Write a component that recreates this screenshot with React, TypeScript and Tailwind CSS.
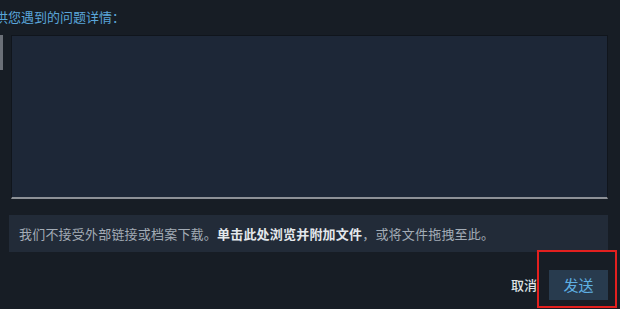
export default function App() {
  return (
    <div className="h-[309px] overflow-hidden bg-[#171d25] font-['Noto_Sans_CJK_SC','Noto_Sans',sans-serif]">
      <div className="w-[608px] pt-[8px]">
        {/* label, cut by the left edge of the view */}
        <div className="-ml-[18px] text-[13px] leading-[18px] whitespace-nowrap text-[#5aa6db]">
          提供您遇到的问题详情：
        </div>

        {/* textarea row */}
        <div className="mt-[9px] flex items-start">
          <div className="h-[35px] w-[3px] bg-[#6b7078]" />
          <div className="ml-[8px] flex-1">
            <textarea
              className="block h-[164px] w-full resize-none border-t border-l border-r border-[#10151c] border-b-2 border-b-[#8d9197] bg-[#1d2737] px-2 py-1 text-[13px] text-[#dfe3e6] outline-none"
              defaultValue=""
            />
          </div>
        </div>

        {/* attachment hint */}
        <div className="ml-[9px] mt-[16px] flex h-[37px] items-center bg-[#222b38] px-[10px] text-[13px] tracking-[0.2px] whitespace-nowrap text-[#a3acb6]">
          我们不接受外部链接或档案下载。
          <span className="font-semibold text-[#e4e8ec]">单击此处浏览并附加文件</span>
          ，或将文件拖拽至此。
        </div>

        {/* actions */}
        <div className="mt-[18px] flex items-center justify-end gap-[12px]">
          <span className="text-[13px] font-medium text-[#dfe3e6]">取消</span>
          <div className="relative">
            <button className="flex h-[30px] w-[59px] items-center justify-center bg-[#283b4e] text-[15px] text-[#5fb0e2]">
              发送
            </button>
            <div className="pointer-events-none absolute -bottom-[8px] -left-[12px] -right-[9px] -top-[20px] border-2 border-[#e3201f]" />
          </div>
        </div>
      </div>
    </div>
  );
}
